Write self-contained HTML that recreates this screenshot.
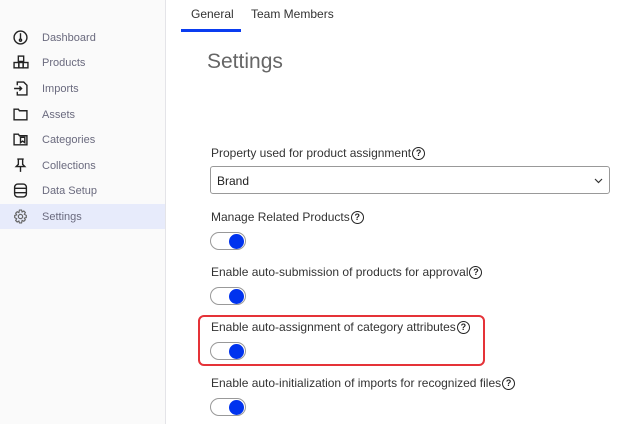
<!DOCTYPE html>
<html><head><style>
*{margin:0;padding:0;box-sizing:border-box}
body{width:617px;height:424px;overflow:hidden;background:#fff;font-family:"Liberation Sans",sans-serif;position:relative}
#side{position:absolute;left:0;top:0;width:166px;height:424px;background:#fafafa;border-right:1px solid #e4e4e8}
.it{position:absolute;left:0;width:165px;height:25px;font-size:11px;color:#6a6a7e;line-height:25px}
.it span{position:absolute;left:42px;top:1px}
.it svg{position:absolute;left:13px;top:5px}
.act{background:#e7ebfb}
.lbl{position:absolute;left:211px;font-size:12px;color:#333}
.q{display:inline-block;width:13px;height:13px;border:1.3px solid #222;border-radius:50%;font-size:9px;line-height:10px;text-align:center;color:#222;margin-left:1px;vertical-align:1px;font-weight:bold}
.tg{position:absolute;left:210px;width:36px;height:18px;border:1.3px solid #999;border-radius:9px;background:#fff}
.tg:after{content:"";position:absolute;right:1px;top:0.5px;width:15px;height:15px;border-radius:50%;background:#0033ee}
</style></head><body>
<div id="side">
<div class="it" style="top:25px"><svg width="15" height="15" viewBox="0 0 14 14" fill="none" stroke="#222" stroke-width="1.3"><circle cx="7" cy="7" r="6"/><path d="M7 3v5"/><circle cx="7" cy="9.5" r="1"/></svg><span>Dashboard</span></div>
<div class="it" style="top:50px"><svg width="16" height="15" viewBox="0 0 15 14" fill="none" stroke="#222" stroke-width="1.3"><rect x="5" y="1" width="5" height="5"/><rect x="1" y="7" width="4.5" height="5"/><rect x="5.5" y="7" width="4" height="5"/><rect x="9.5" y="7" width="4.5" height="5"/></svg><span>Products</span></div>
<div class="it" style="top:76px"><svg width="15" height="15" viewBox="0 0 14 14" fill="none" stroke="#222" stroke-width="1.3"><path d="M4 4V1h6l3 3v9H4v-3"/><path d="M1 7h7M6 5l2 2-2 2"/></svg><span>Imports</span></div>
<div class="it" style="top:102px"><svg width="15" height="15" viewBox="0 0 14 14" fill="none" stroke="#222" stroke-width="1.3"><path d="M1 2h4l1 1.5h7V12H1z"/></svg><span>Assets</span></div>
<div class="it" style="top:127px"><svg width="15" height="15" viewBox="0 0 14 14" fill="none" stroke="#222" stroke-width="1.3"><path d="M1 2h4l1 1.5h7V12H1z"/><path d="M7 5h4v5l-2-1.5L7 10z"/></svg><span>Categories</span></div>
<div class="it" style="top:153px"><svg width="15" height="15" viewBox="0 0 14 14" fill="none" stroke="#222" stroke-width="1.3"><path d="M4 1h6M5 1v5L3 8h8L9 6V1M7 8v5"/></svg><span>Collections</span></div>
<div class="it" style="top:178px"><svg width="15" height="15" viewBox="0 0 14 14" fill="none" stroke="#222" stroke-width="1.3"><rect x="1.5" y="1" width="11" height="12" rx="3"/><path d="M1.5 5h11M1.5 9h11"/></svg><span>Data Setup</span></div>
<div class="it act" style="top:204px"><svg width="15" height="15" viewBox="0 0 14 14" fill="none" stroke="#666" stroke-width="1.1"><circle cx="7" cy="7" r="2"/><path d="M6 1h2l.5 1.8 1.6-.9 1.4 1.4-.9 1.6L12.4 6v2l-1.8.5.9 1.6-1.4 1.4-1.6-.9L8 13H6l-.5-1.8-1.6.9-1.4-1.4.9-1.6L1.6 8V6l1.8-.5-.9-1.6 1.4-1.4 1.6.9z"/></svg><span>Settings</span></div>
</div>
<div style="position:absolute;left:191px;top:7px;font-size:12px;color:#333">General</div>
<div style="position:absolute;left:251px;top:7px;font-size:12px;color:#333">Team Members</div>
<div style="position:absolute;left:181px;top:29px;width:60px;height:3px;background:#0a3cf0"></div>
<div style="position:absolute;left:207px;top:50px;font-size:21px;color:#666">Settings</div>
<div class="lbl" style="top:146px">Property used for product assignment<span class="q">?</span></div>
<div style="position:absolute;left:210px;top:166px;width:400px;height:28px;border:1px solid #999;border-radius:3px;font-size:12px;color:#222;padding:7px 0 0 6px">Brand<svg style="position:absolute;right:6px;top:11px" width="9" height="6" viewBox="0 0 9 6" fill="none" stroke="#333" stroke-width="1.2"><path d="M1 1l3.5 3.5L8 1"/></svg></div>
<div class="lbl" style="top:210px">Manage Related Products<span class="q">?</span></div>
<div class="tg" style="top:232px"></div>
<div class="lbl" style="top:265px">Enable auto-submission of products for approval<span class="q">?</span></div>
<div class="tg" style="top:287px"></div>
<div style="position:absolute;left:198px;top:315px;width:287px;height:51px;border:2px solid #e53238;border-radius:6px"></div>
<div class="lbl" style="top:320px">Enable auto-assignment of category attributes<span class="q">?</span></div>
<div class="tg" style="top:342px"></div>
<div class="lbl" style="top:376px">Enable auto-initialization of imports for recognized files<span class="q">?</span></div>
<div class="tg" style="top:398px"></div>
</body></html>
